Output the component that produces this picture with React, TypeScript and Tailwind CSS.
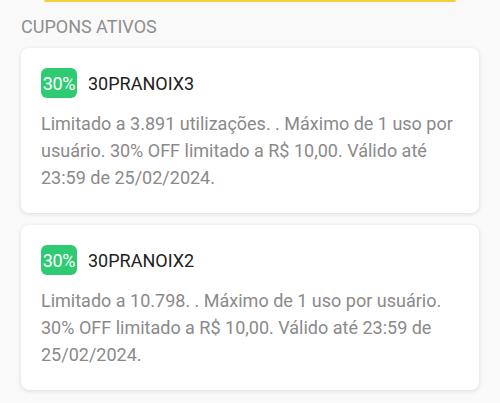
const coupons = [
  {
    pct: '30%',
    code: '30PRANOIX3',
    text: 'Limitado a 3.891 utilizações. . Máximo de 1 uso por usuário. 30% OFF limitado a R$ 10,00. Válido até 23:59 de 25/02/2024.',
  },
  {
    pct: '30%',
    code: '30PRANOIX2',
    text: 'Limitado a 10.798. . Máximo de 1 uso por usuário. 30% OFF limitado a R$ 10,00. Válido até 23:59 de 25/02/2024.',
  },
];

export default function App() {
  return (
    <div className="min-h-screen bg-[#f9f9f9] font-['Roboto',sans-serif]">
      <div className="mx-[44px] h-[2px] rounded-b-full bg-[#f4d03f]" />

      <div className="px-[21px]">
        <h2 className="mt-[13px] text-[18px] leading-[24px] text-[#8e8e8e]">CUPONS ATIVOS</h2>

        <div className="mt-[9px] flex flex-col gap-[12px]">
          {coupons.map(c => (
            <div
              key={c.code}
              className="rounded-[8px] bg-white px-[20px] pt-[20px] pb-[22px] shadow-[0_1px_4px_rgba(0,0,0,0.13)]"
            >
              <div className="flex items-center gap-[11px]">
                <span className="flex h-[30px] w-[36px] items-center justify-center rounded-[6px] bg-[#2fcb73] text-[18px] tracking-[-0.3px] text-white">
                  {c.pct}
                </span>
                <span className="text-[18px] text-[#212121]">{c.code}</span>
              </div>
              <p className="mt-[12px] text-[18px] leading-[27px] text-[#8a8a8a]">{c.text}</p>
            </div>
          ))}
        </div>
      </div>
    </div>
  );
}
